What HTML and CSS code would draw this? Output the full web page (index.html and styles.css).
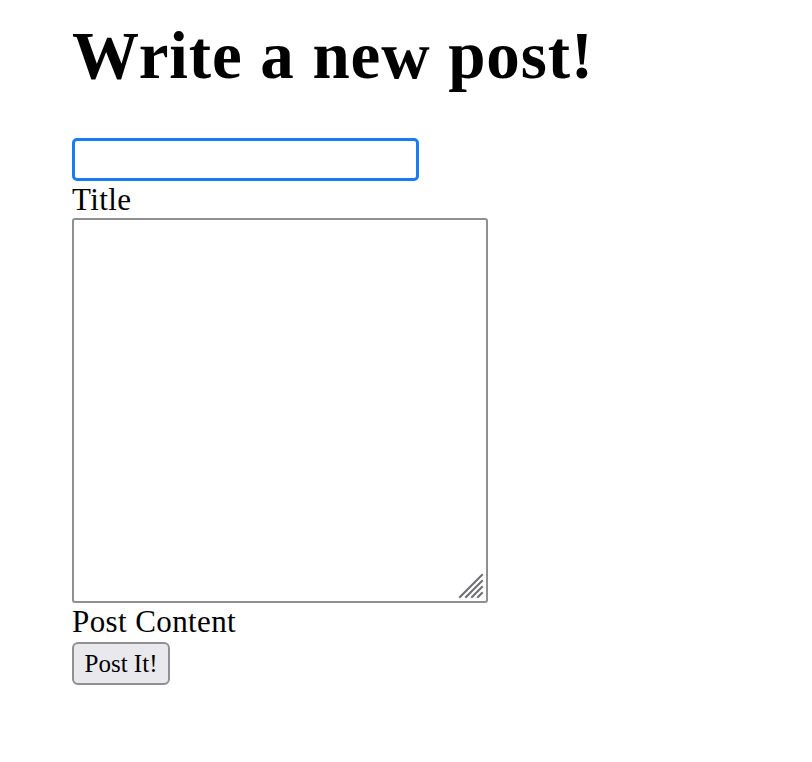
FILE: index.html
```html
<!DOCTYPE html>
<html>
<head>
<meta charset="utf-8">
<link rel="stylesheet" href="styles.css">
</head>
<body>
<main class="page">
  <h1 class="title">Write a new post!</h1>
  <form class="post-form">
    <input class="title-input" type="text">
    <label class="field-label">Title</label>
    <div class="area-wrap">
      <textarea class="content-area"></textarea>
      <svg class="resizer" width="26" height="26" viewBox="0 0 26 26">
        <g stroke="#6e6e73" stroke-width="2" stroke-linecap="square">
          <line x1="2" y1="24" x2="24" y2="2"/>
          <line x1="8" y1="24" x2="24" y2="8"/>
          <line x1="14" y1="24" x2="24" y2="14"/>
          <line x1="20" y1="24" x2="24" y2="20"/>
        </g>
      </svg>
    </div>
    <label class="field-label">Post Content</label>
    <button class="submit" type="button">Post It!</button>
  </form>
</main>
</body>
</html>
```
FILE: styles.css
```css
html, body {
  margin: 0;
  padding: 0;
  background: #ffffff;
}
.page {
  padding: 19px 0 0 72px;
  font-family: "Liberation Serif", "Times New Roman", serif;
  color: #000;
}
.title {
  margin: 0;
  font-size: 67px;
  line-height: 73px;
  font-weight: bold;
  letter-spacing: 0.9px;
}
.post-form {
  margin-top: 46px;
  display: flex;
  flex-direction: column;
  align-items: flex-start;
}
.title-input {
  box-sizing: border-box;
  width: 347px;
  height: 43px;
  margin: 0;
  border: 3px solid #1a7cf2;
  border-radius: 5px;
  outline: none;
  background: #fff;
  padding: 0 6px;
  font-family: inherit;
  font-size: 24px;
}
.field-label {
  font-size: 31px;
  line-height: 37px;
  height: 37px;
  letter-spacing: 0.4px;
}
.area-wrap {
  position: relative;
  width: 416px;
  height: 385px;
}
.content-area {
  box-sizing: border-box;
  display: block;
  width: 416px;
  height: 385px;
  margin: 0;
  border: 2px solid #8f8f96;
  border-radius: 3px;
  background: #fff;
  resize: none;
  outline: none;
  padding: 4px;
  font-family: inherit;
  font-size: 24px;
}
.resizer {
  position: absolute;
  right: 4px;
  bottom: 4px;
}
.submit {
  box-sizing: border-box;
  margin-top: 2px;
  width: 98px;
  height: 43px;
  padding: 0;
  border: 2px solid #8f8f96;
  border-radius: 6px;
  background: #e9e9ed;
  font-family: inherit;
  font-size: 25px;
  color: #000;
}
```
